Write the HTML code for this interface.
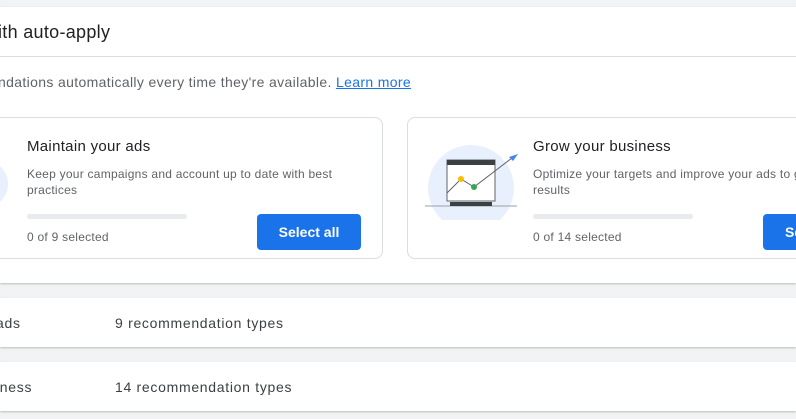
<!DOCTYPE html><html><head><style>
body{margin:0;width:796px;height:419px;overflow:hidden;background:#f1f3f4;font-family:"Liberation Sans",Arial,sans-serif}
#w{position:relative;width:796px;height:419px;overflow:hidden}
.a{position:absolute}
.panel{left:0;top:7px;width:796px;height:276px;background:#fff;box-shadow:0 1px 2px rgba(60,64,67,.3)}
.card{border:1px solid #dadce0;border-radius:8px;background:#fff;height:140px;top:117px}
.h{font-size:15px;color:#202124;letter-spacing:.3px}
.d{font-size:12px;color:#5f6368;line-height:16px;letter-spacing:.25px}
.bar{height:5px;background:#e8eaed;border-radius:3px;width:160px}
.btn{background:#1a73e8;color:#fff;font-weight:bold;font-size:14px;border-radius:4px;height:36px;line-height:36px;text-align:center}
.row{left:0;width:796px;height:49px;background:#fff;box-shadow:0 1px 2px rgba(60,64,67,.3)}
.row span{position:absolute;top:17px;font-size:14px;color:#3c4043;letter-spacing:.7px}
</style></head><body><div id="w">
<div class="a panel"></div>
<div class="a" style="left:-2px;top:22px;font-size:18px;color:#202124;letter-spacing:.3px">ith auto-apply</div>
<div class="a" style="left:0;top:56px;width:796px;height:1px;background:#dadce0"></div>
<div class="a" style="left:-2px;top:74px;font-size:14px;color:#5f6368;letter-spacing:.35px">ndations automatically every time they're available. <span style="color:#1a73e8;text-decoration:underline">Learn more</span></div>
<div class="a card" style="left:-20px;width:401px"></div>
<div class="a" style="left:-40px;top:160px;width:48px;height:48px;border-radius:50%;background:#e8f0fe"></div>
<div class="a h" style="left:27px;top:138px">Maintain your ads</div>
<div class="a d" style="left:27px;top:166px;width:320px">Keep your campaigns and account up to date with best practices</div>
<div class="a bar" style="left:27px;top:214px"></div>
<div class="a d" style="left:27px;top:229px">0 of 9 selected</div>
<div class="a btn" style="left:257px;top:214px;width:104px">Select all</div>
<div class="a card" style="left:407px;width:420px"></div>
<svg class="a" style="left:420px;top:140px" width="105" height="80">
<circle cx="51" cy="48" r="43" fill="#e8f0fe"/>
<line x1="5" y1="66" x2="97" y2="66" stroke="#9aa0a6"/>
<rect x="27" y="20" width="48" height="41" fill="#fff" stroke="#5f6368"/>
<rect x="27" y="20" width="48" height="5" fill="#3c4043"/>
<rect x="30" y="62" width="42" height="4" fill="#3c4043"/>
<polyline points="27,53 41,39 54,47 92,18" fill="none" stroke="#5f6368" stroke-width="1"/>
<polygon points="98,14 89,17 93,21" fill="#4285f4"/>
<circle cx="41" cy="39" r="3" fill="#fbbc04"/><circle cx="54" cy="47" r="3" fill="#34a853"/>
</svg>
<div class="a h" style="left:533px;top:138px">Grow your business</div>
<div class="a d" style="left:533px;top:166px;width:300px;white-space:nowrap">Optimize your targets and improve your ads to get<br>results</div>
<div class="a bar" style="left:533px;top:214px"></div>
<div class="a d" style="left:533px;top:229px">0 of 14 selected</div>
<div class="a btn" style="left:763px;top:214px;width:104px;text-align:left;padding-left:22px">Select all</div>
<div class="a row" style="top:298px"><span style="left:-4px">ads</span><span style="left:115px">9 recommendation types</span></div>
<div class="a row" style="top:362px"><span style="left:-4px">iness</span><span style="left:115px">14 recommendation types</span></div>
</div></body></html>
